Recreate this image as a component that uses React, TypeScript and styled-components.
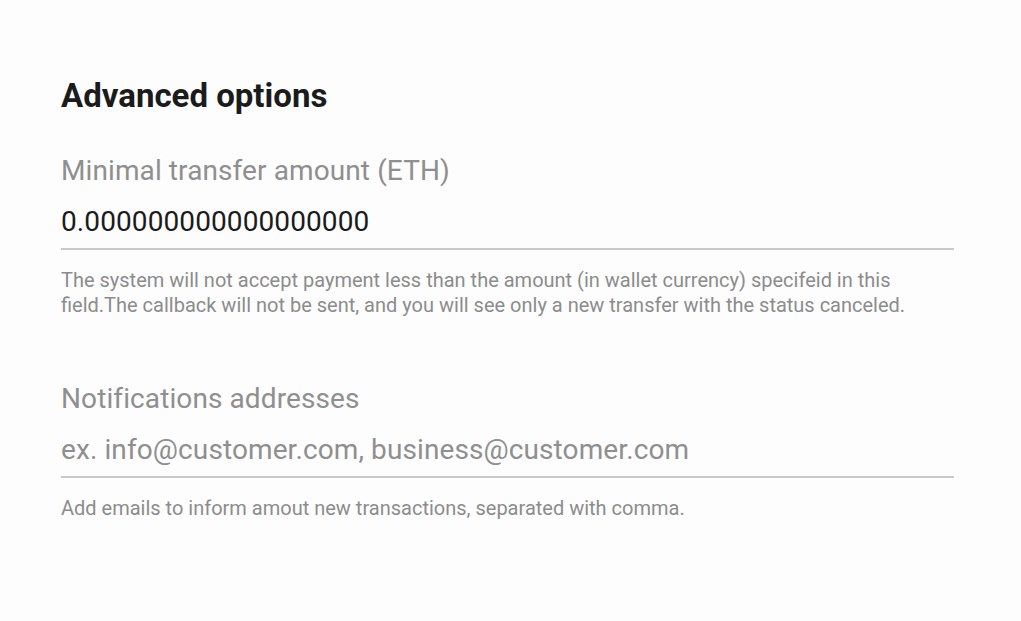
import React from 'react'
import styled, { createGlobalStyle } from 'styled-components'

const GlobalStyle = createGlobalStyle`
  html, body {
    margin: 0;
    padding: 0;
    background-color: #fdfdfd;
    font-family: Roboto, 'Liberation Sans', Arial, sans-serif;
  }
`
const Wrapper = styled.div`
  width: 893px;
  padding: 77px 61px 0;
  display: flex;
  flex-direction: column;
`
const Title = styled.h2`
  margin: 0 0 39px;
  font-size: 33px;
  line-height: 38px;
  font-weight: 700;
  color: #1b1b1b;
`
const Field = styled.div`
  display: flex;
  flex-direction: column;
  & + & {
    margin-top: 64px;
  }
`
const Label = styled.label`
  display: block;
  font-size: 28px;
  line-height: 34px;
  letter-spacing: 0.1px;
  color: #8f8f8f;
  margin-bottom: 17px;
`
const Input = styled.input`
  display: block;
  width: 100%;
  height: 34px;
  margin: 0;
  padding: 0 0 9px;
  border: none;
  border-bottom: 2px solid #c9c9c9;
  background: transparent;
  outline: none;
  font-family: inherit;
  font-size: 28px;
  line-height: 34px;
  letter-spacing: 0.1px;
  color: #1b1b1b;
  &::placeholder {
    color: #8f8f8f;
    opacity: 1;
  }
`
const Hint = styled.p`
  margin: 18px 0 0;
  font-size: 20px;
  line-height: 25px;
  color: #8c8c8c;
`

export default function App () {
  return (
    <>
      <GlobalStyle />
      <Wrapper>
        <Title>Advanced options</Title>
        <Field>
          <Label>Minimal transfer amount (ETH)</Label>
          <Input type='text' defaultValue='0.000000000000000000' />
          <Hint>
            The system will not accept payment less than the amount (in wallet currency) specifeid in this
            field.The callback will not be sent, and you will see only a new transfer with the status canceled.
          </Hint>
        </Field>
        <Field>
          <Label>Notifications addresses</Label>
          <Input type='text' placeholder='ex. info@customer.com, business@customer.com' />
          <Hint>Add emails to inform amout new transactions, separated with comma.</Hint>
        </Field>
      </Wrapper>
    </>
  )
}
